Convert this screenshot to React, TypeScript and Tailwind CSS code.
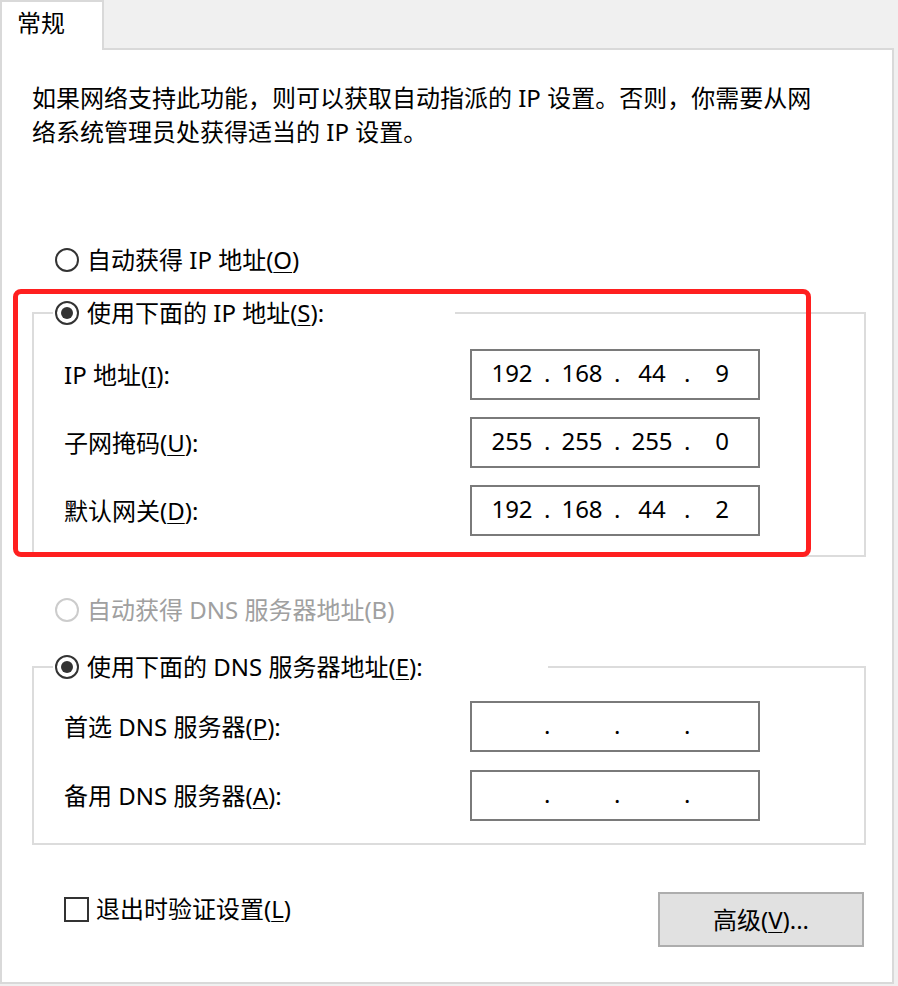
import { Fragment, type ReactNode } from "react";

function Mn({ children }: { children: ReactNode }) {
  return <span className="underline decoration-1 underline-offset-[3px]">{children}</span>;
}

function Radio({ checked, disabled }: { checked?: boolean; disabled?: boolean }) {
  return (
    <span
      className={
        disabled
          ? "flex h-6 w-6 shrink-0 items-center justify-center rounded-full border-2 border-[#cccccc] bg-white"
          : "flex h-6 w-6 shrink-0 items-center justify-center rounded-full border-2 border-[#333333] bg-white"
      }
    >
      {checked && <span className="h-3 w-3 rounded-full bg-[#333333]" />}
    </span>
  );
}

function IpBox({ parts }: { parts: string[] }) {
  return (
    <div className="flex h-[51px] w-[290px] items-center border-2 border-[#7a7a7a] pb-[4px] pl-[8px] leading-[34px]">
      {parts.map((p, i) => (
        <Fragment key={i}>
          {i > 0 && <span className="w-[6px] text-center">.</span>}
          <span className="w-16 text-center">{p}</span>
        </Fragment>
      ))}
    </div>
  );
}

function Row({ label, parts }: { label: ReactNode; parts: string[] }) {
  return (
    <div className="flex items-center pl-[30px]">
      <div className="w-[406px] leading-[34px]">{label}</div>
      <IpBox parts={parts} />
    </div>
  );
}

export default function App() {
  return (
    <div className="relative h-[986px] w-[898px] overflow-hidden bg-[#f0f0f0] font-['Noto_Sans','Noto_Sans_CJK_SC',sans-serif] text-[24px] text-black">
      {/* Tab */}
      <div className="relative z-10 -mb-[2px] h-[50px] w-[104px] border-2 border-b-0 border-[#d9d9d9] bg-white pl-[15px] pt-[4px] leading-[34px]">
        常规
      </div>

      {/* Panel */}
      <div className="h-[936px] w-[894px] border-2 border-[#d9d9d9] bg-white">
        <p className="mt-[31px] pl-[30px] leading-[34px] whitespace-nowrap">
          如果网络支持此功能，则可以获取自动指派的 IP 设置。否则，你需要从网
          <br />
          络系统管理员处获得适当的 IP 设置。
        </p>

        <div className="ml-[53px] mt-[94px] flex items-center gap-2 leading-[34px]">
          <Radio />
          <span>
            自动获得 IP 地址(<Mn>O</Mn>)
          </span>
        </div>

        <fieldset className="ml-[30px] mt-[19px] w-[834px] border-2 border-[#dcdcdc] pb-[19px] pt-[19px]">
          <legend className="ml-[19px] w-[402px] bg-white pl-[2px]">
            <div className="flex items-center gap-2 leading-[34px]">
              <Radio checked />
              <span>
                使用下面的 IP 地址(<Mn>S</Mn>):
              </span>
            </div>
          </legend>
          <div className="flex flex-col gap-[17px]">
            <Row
              label={
                <>
                  IP 地址(<Mn>I</Mn>):
                </>
              }
              parts={["192", "168", "44", "9"]}
            />
            <Row
              label={
                <>
                  子网掩码(<Mn>U</Mn>):
                </>
              }
              parts={["255", "255", "255", "0"]}
            />
            <Row
              label={
                <>
                  默认网关(<Mn>D</Mn>):
                </>
              }
              parts={["192", "168", "44", "2"]}
            />
          </div>
        </fieldset>

        <div className="ml-[53px] mt-[36px] flex items-center gap-2 leading-[34px] text-[#a0a0a0]">
          <Radio disabled />
          <span>自动获得 DNS 服务器地址(B)</span>
        </div>

        <fieldset className="ml-[30px] mt-[23px] w-[834px] border-2 border-[#dcdcdc] pb-[22px] pt-[17px]">
          <legend className="ml-[19px] w-[495px] bg-white pl-[2px]">
            <div className="flex items-center gap-2 leading-[34px]">
              <Radio checked />
              <span>
                使用下面的 DNS 服务器地址(<Mn>E</Mn>):
              </span>
            </div>
          </legend>
          <div className="flex flex-col gap-[18px]">
            <Row
              label={
                <>
                  首选 DNS 服务器(<Mn>P</Mn>):
                </>
              }
              parts={["", "", "", ""]}
            />
            <Row
              label={
                <>
                  备用 DNS 服务器(<Mn>A</Mn>):
                </>
              }
              parts={["", "", "", ""]}
            />
          </div>
        </fieldset>

        <div className="mt-[47px] flex items-start pl-[62px] pr-[28px]">
          <div className="flex flex-1 items-center gap-[7px] leading-[34px]">
            <span className="h-[25px] w-[25px] border-2 border-[#333333] bg-white" />
            <span>
              退出时验证设置(<Mn>L</Mn>)
            </span>
          </div>
          <button className="flex h-[55px] w-[206px] items-center justify-center border-2 border-[#adadad] bg-[#e1e1e1] leading-[34px]">
            高级(<Mn>V</Mn>)...
          </button>
        </div>
      </div>

      {/* Red annotation frame */}
      <div className="pointer-events-none absolute left-[13px] top-[289px] h-[268px] w-[798px] rounded-[8px] border-[5px] border-[#ff1f1f]" />
    </div>
  );
}
